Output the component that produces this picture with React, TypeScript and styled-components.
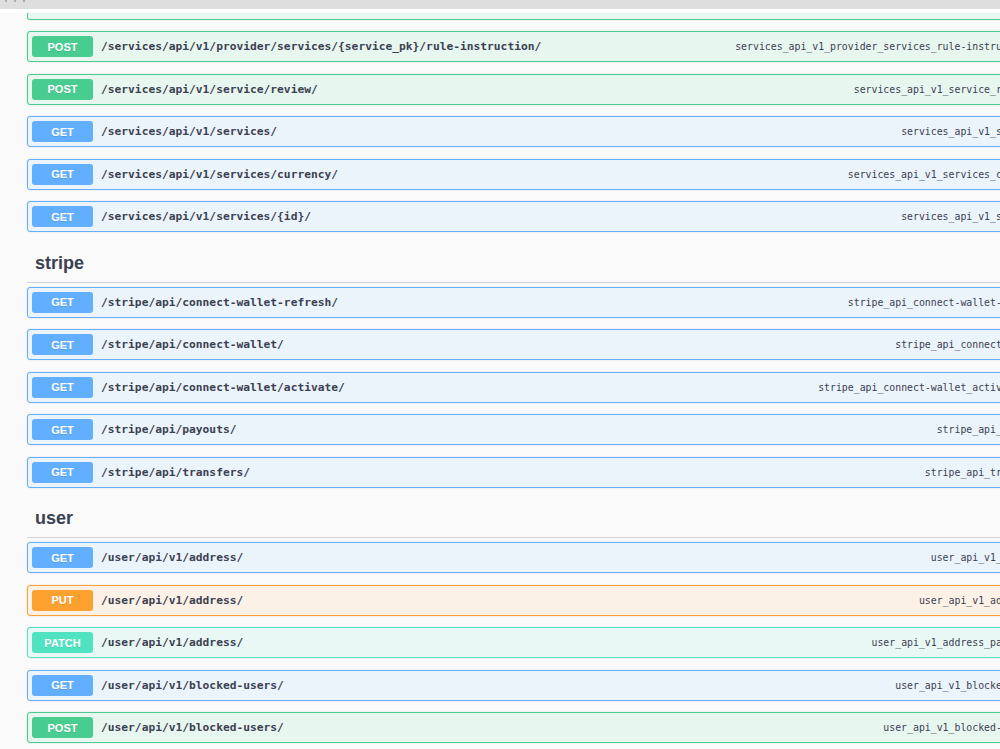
import React from "react";
import styled, { createGlobalStyle, css } from "styled-components";

type Method = "GET" | "POST" | "PUT" | "PATCH";

const palette: Record<Method, { main: string; bg: string }> = {
  GET: { main: "#61affe", bg: "#ebf3fb" },
  POST: { main: "#49cc90", bg: "#e8f6f0" },
  PUT: { main: "#fca130", bg: "#fbf1e6" },
  PATCH: { main: "#50e3c2", bg: "#e9f8f5" },
};

const GlobalStyle = createGlobalStyle`
  html, body {
    margin: 0;
    padding: 0;
    overflow: hidden;
    background: #fafafa;
  }
  body {
    font-family: "Liberation Sans", Arial, sans-serif;
    color: #3b4151;
  }
`;

const Page = styled.div`
  width: 1200px;
  min-height: 749px;
  display: flex;
  flex-direction: column;
  background: #fafafa;
`;

const TopBar = styled.div`
  height: 9px;
  background: #dedede;
  display: flex;
  gap: 7px;
  padding-left: 5px;
  align-items: flex-start;
`;

const Tick = styled.span`
  width: 2px;
  height: 2px;
  background: #9a9a9a;
  border-radius: 1px;
`;

const WhiteStrip = styled.div`
  height: 4px;
  background: #ffffff;
`;

const Content = styled.div`
  width: 1100px;
  padding-left: 27px;
  display: flex;
  flex-direction: column;
`;

const Stub = styled.div<{ $m: Method }>`
  height: 5.5px;
  background: ${(p) => palette[p.$m].bg};
  border: 1px solid ${(p) => palette[p.$m].main};
  border-top: none;
  border-radius: 0 0 3px 3px;
  margin-bottom: 11.5px;
  box-shadow: 0 0 2px rgba(0, 0, 0, 0.12);
`;

const Section = styled.section`
  display: flex;
  flex-direction: column;
`;

const TagHeading = styled.h3`
  margin: 0 0 4px;
  padding: 9px 0 8px 8px;
  font-family: "Liberation Sans", Arial, sans-serif;
  font-size: 18px;
  line-height: 21px;
  font-weight: 700;
  color: #3b4151;
  border-bottom: 1px solid rgba(59, 65, 81, 0.2);
`;

const Row = styled.div<{ $m: Method }>`
  display: flex;
  align-items: center;
  padding: 4px;
  margin-bottom: 11.5px;
  border-radius: 3px;
  ${(p) => css`
    background: ${palette[p.$m].bg};
    border: 1px solid ${palette[p.$m].main};
  `}
  box-shadow: 0 0 2px rgba(0, 0, 0, 0.12);
`;

const Badge = styled.span<{ $m: Method }>`
  flex: none;
  width: 61px;
  height: 21px;
  display: flex;
  align-items: center;
  justify-content: center;
  border-radius: 3px;
  background: ${(p) => palette[p.$m].main};
  color: #ffffff;
  font-family: "Liberation Sans", Arial, sans-serif;
  font-size: 11px;
  font-weight: 700;
  text-shadow: 0 1px 0 rgba(0, 0, 0, 0.1);
`;

const Path = styled.span`
  padding: 0 8px;
  font-family: "DejaVu Sans Mono", monospace;
  font-size: 11.25px;
  font-weight: 700;
  color: #3b4151;
  white-space: nowrap;
`;

const OpId = styled.span`
  margin-left: auto;
  margin-right: 49px;
  font-family: "DejaVu Sans Mono", monospace;
  font-size: 9.85px;
  color: #3b4151;
  white-space: nowrap;
`;

type Op = { m: Method; path: string; id: string };

const sections: { title?: string; ops: Op[] }[] = [
  {
    ops: [
      {
        m: "POST",
        path: "/services/api/v1/provider/services/{service_pk}/rule-instruction/",
        id: "services_api_v1_provider_services_rule-instruction_create",
      },
      { m: "POST", path: "/services/api/v1/service/review/", id: "services_api_v1_service_review_create" },
      { m: "GET", path: "/services/api/v1/services/", id: "services_api_v1_services_list" },
      { m: "GET", path: "/services/api/v1/services/currency/", id: "services_api_v1_services_currency_list" },
      { m: "GET", path: "/services/api/v1/services/{id}/", id: "services_api_v1_services_read" },
    ],
  },
  {
    title: "stripe",
    ops: [
      { m: "GET", path: "/stripe/api/connect-wallet-refresh/", id: "stripe_api_connect-wallet-refresh_list" },
      { m: "GET", path: "/stripe/api/connect-wallet/", id: "stripe_api_connect-wallet_list" },
      { m: "GET", path: "/stripe/api/connect-wallet/activate/", id: "stripe_api_connect-wallet_activate_activate" },
      { m: "GET", path: "/stripe/api/payouts/", id: "stripe_api_payouts_list" },
      { m: "GET", path: "/stripe/api/transfers/", id: "stripe_api_transfers_list" },
    ],
  },
  {
    title: "user",
    ops: [
      { m: "GET", path: "/user/api/v1/address/", id: "user_api_v1_address_list" },
      { m: "PUT", path: "/user/api/v1/address/", id: "user_api_v1_address_update" },
      { m: "PATCH", path: "/user/api/v1/address/", id: "user_api_v1_address_partial_update" },
      { m: "GET", path: "/user/api/v1/blocked-users/", id: "user_api_v1_blocked-users_list" },
      { m: "POST", path: "/user/api/v1/blocked-users/", id: "user_api_v1_blocked-users_create" },
    ],
  },
];

export default function App() {
  return (
    <>
      <GlobalStyle />
      <Page>
        <TopBar>
          <Tick />
          <Tick />
          <Tick />
        </TopBar>
        <WhiteStrip />
        <Content>
          <Stub $m="POST" />
          {sections.map((s, i) => (
            <Section key={i}>
              {s.title && <TagHeading>{s.title}</TagHeading>}
              {s.ops.map((o, j) => (
                <Row key={j} $m={o.m}>
                  <Badge $m={o.m}>{o.m}</Badge>
                  <Path>{o.path}</Path>
                  <OpId>{o.id}</OpId>
                </Row>
              ))}
            </Section>
          ))}
        </Content>
      </Page>
    </>
  );
}
